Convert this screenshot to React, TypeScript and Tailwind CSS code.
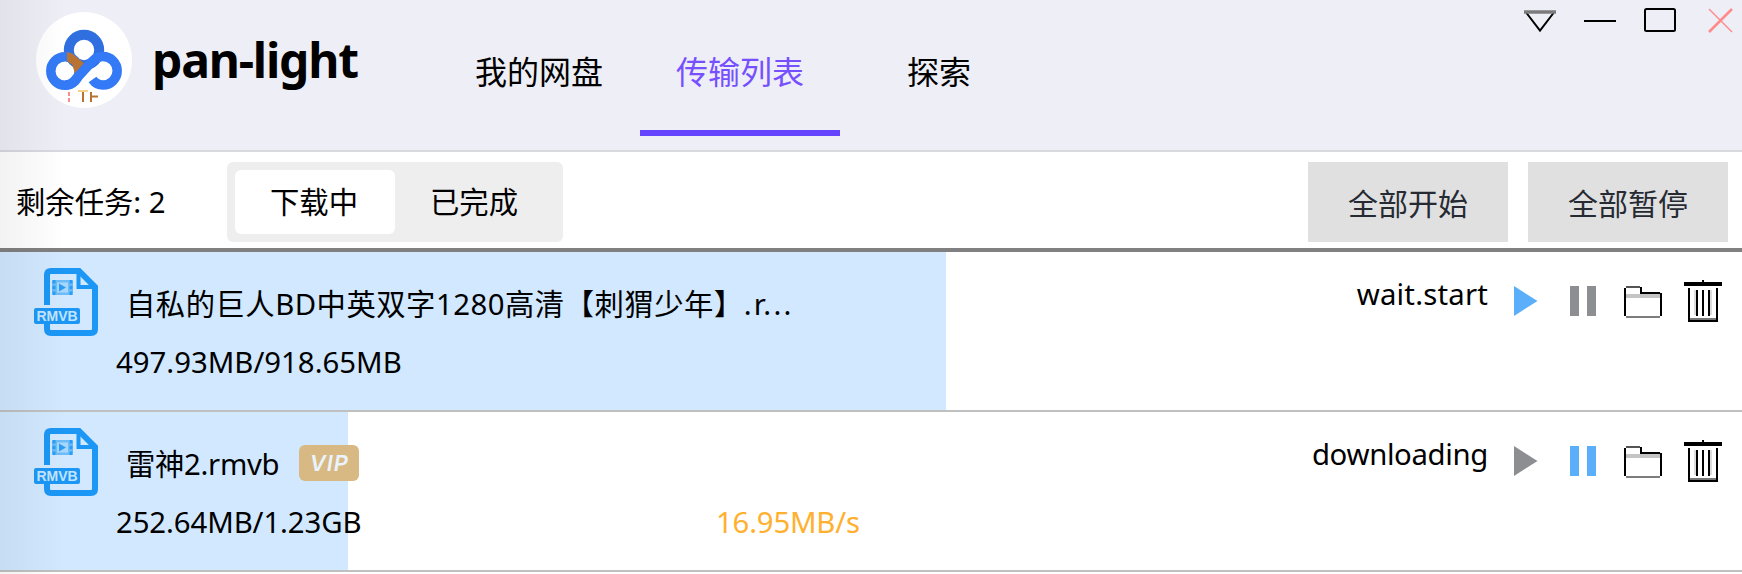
import React from "react";

const FONT = "font-['Noto_Sans','Noto_Sans_CJK_SC',sans-serif]";

function Logo() {
  return (
    <svg className="block h-24 w-24 shrink-0" viewBox="0 0 96 96" fill="none">
      <circle cx="48" cy="48" r="48" fill="#fff" />
      <circle cx="48" cy="38" r="15.2" stroke="#2f6fe0" strokeWidth="10" />
      <circle cx="29" cy="59" r="14.2" stroke="#347af6" strokeWidth="9.5" />
      <path d="M31 40 36 41.500 48 51 39 62 36.500 53 31 49z" fill="#b87333" />
      <path
        d="M56.500 67.500C60 72.500 64 73 67 73a14.200 14.200 0 0 0 0-28.400c-5 0-8 2-11 5L39.500 67.500c-3 3.500-6 5.500-10.500 5.500"
        stroke="#347af6"
        strokeWidth="9.5"
      />
      <path d="M33 80v4M33 86v4" stroke="#fb8b8b" strokeWidth="2" />
      <path d="M42 79h10" stroke="#f5d38c" strokeWidth="2" />
      <path d="M47 80v10M55 80v10M55 84.500h7" stroke="#b87333" strokeWidth="2" />
    </svg>
  );
}

function WindowControls() {
  return (
    <svg className="mt-1.5 mr-2 block h-7 w-[212px] shrink-0" viewBox="0 0 212 28" fill="none" stroke="#000">
      <path d="M4.500 7 18 24.500 31.500 7" strokeWidth="2" />
      <path d="M2 6h32" stroke="#7b7b7d" strokeWidth="3.5" />
      <path d="M62 15h32" strokeWidth="2" />
      <rect x="123" y="3" width="30" height="22" rx="1.5" strokeWidth="2" />
      <path d="M187 3 210 26" stroke="#ff8a8a" strokeWidth="1.5" />
      <path d="M210 3 187 26" stroke="#ff8a8a" strokeWidth="2.5" />
    </svg>
  );
}

function FileIcon() {
  return (
    <div className="relative mt-4 ml-[34px] h-[68px] w-16 shrink-0">
      <svg className="block h-[68px] w-16" viewBox="0 0 64 68" fill="none">
        <path
          d="M13 37V7q0-4 4-4h28l16 16v42q0 4-4 4H17q-4 0-4-4v-5"
          stroke="#1c97f5"
          strokeWidth="6"
        />
        <path d="M44.500 4v15H61" stroke="#1c97f5" strokeWidth="4" />
        <rect x="18" y="12" width="21" height="15" rx="2" fill="#6cbcf9" />
        <path d="M20 12v15M37 12v15" stroke="#2b9df6" strokeWidth="3" strokeDasharray="3.5 2.2" />
        <rect x="23" y="14.5" width="11" height="10" fill="#a9d7fc" />
        <path d="M25 15.500v8l7-4z" fill="#2b9df6" />
        <rect x="0" y="40" width="46" height="16" rx="2" fill="#1c97f5" />
      </svg>
      <span className="absolute top-10 left-0 w-[46px] text-center font-['Liberation_Sans',sans-serif] text-[14px] leading-4 font-bold text-[#c3e4fd]">
        RMVB
      </span>
    </div>
  );
}

function Actions({ running }: { running: boolean }) {
  return (
    <svg className="mt-7 mr-5 ml-[26px] block h-[42px] w-[208px] shrink-0" viewBox="0 0 208 42" fill="none">
      <path d="M0 6 23.500 21 0 36z" fill={running ? "#8c8e91" : "#5aaefa"} />
      <path d="M56 6h9v30h-9zM73 6h9v30h-9z" fill={running ? "#5aaefa" : "#8c8e91"} />
      <path d="M112 16h35" stroke="#c4c4c4" strokeWidth="4" />
      <path d="M112 37h34" stroke="#7d7d7d" strokeWidth="2" />
      <path d="M112 7h14" stroke="#555" strokeWidth="2" />
      <path d="M111 36V8M127 7v6h19M147 13v23" stroke="#000" strokeWidth="2" />
      <path d="M170 4h38" stroke="#000" strokeWidth="4" />
      <path d="M189 0v4" stroke="#000" strokeWidth="2" />
      <path d="M175 39h28" stroke="#777" strokeWidth="2" />
      <path d="M175 8v33h28V8M183 10v26M189 10v26M195 10v26" stroke="#000" strokeWidth="2" />
      <path d="M181 10v25M197 10v25" stroke="#ddd" strokeWidth="2" />
    </svg>
  );
}

type TaskProps = {
  name: React.ReactNode;
  size: React.ReactNode;
  speed?: string;
  status: React.ReactNode;
  progress: number;
  running: boolean;
  vip?: boolean;
};

function Task({ name, size, speed, status, progress, running, vip }: TaskProps) {
  return (
    <div className="relative flex h-40 border-b-2 border-[#c0c0c0] bg-white">
      <div className="absolute inset-y-0 left-0 bg-[#d1e8ff]" style={{ width: progress }} />
      <div className="relative flex w-full items-start">
        <FileIcon />
        <div className="ml-[18px] flex grow flex-col pt-8">
          <div className="flex h-10 items-center pl-2.5">
            <span className="whitespace-nowrap">{name}</span>
            {vip && (
              <span className="mt-[-3px] ml-5 flex h-9 w-15 items-center justify-center rounded-md bg-[#d8b983] font-['Inter',sans-serif] text-[22px] leading-none font-semibold tracking-[1px] text-[#eaf3fb] italic">
                VIP
              </span>
            )}
          </div>
          <div className="mt-[18px] flex h-10 items-center">
            <span className="w-[600px] whitespace-nowrap">{size}</span>
            <span className="tracking-[-0.2px] text-[#ffb02e]">{speed}</span>
          </div>
        </div>
        <span className="mt-[22px] leading-10">{status}</span>
        <Actions running={running} />
      </div>
    </div>
  );
}

export default function App() {
  return (
    <div className={`relative h-[574px] w-[1742px] overflow-hidden bg-white text-[29.33px] leading-10 text-black ${FONT}`}>
      <header className="flex h-[152px] items-start border-b-2 border-[#d7d9de] bg-[#eeeef6]">
        <div className="flex w-[440px] items-start pt-3 pl-9">
          <Logo />
          <h1 className="mt-[18px] ml-5 text-[48px] leading-[60px] font-bold tracking-[-1.2px]">pan-light</h1>
        </div>
        <nav className="flex grow text-[32px]">
          <div className="flex h-[136px] w-[198px] items-center justify-center pt-2">我的网盘</div>
          <div className="ml-0.5 flex h-[136px] w-[200px] items-center justify-center border-b-[6px] border-[#6444ff] pt-3.5 text-[#7650ff]">
            传输列表
          </div>
          <div className="flex h-[136px] w-[198px] items-center justify-center pt-2">探索</div>
        </nav>
        <WindowControls />
      </header>

      <section className="flex h-[100px] items-center border-b-4 border-[#808080] pt-1 pr-[14px]">
        <span className="w-[227px] pl-4">剩余任务: 2</span>
        <div className="flex h-20 w-[336px] items-center rounded-md bg-[#eee] p-2">
          <div className="flex h-16 w-40 items-center justify-center rounded-md bg-white pr-0.5">下载中</div>
          <div className="flex h-16 w-40 items-center justify-center pr-0.5">已完成</div>
        </div>
        <div className="ml-auto flex gap-5 text-[30px] text-[#262a33]">
          <button className="h-20 w-[200px] bg-[#e0e0e0] pt-1">全部开始</button>
          <button className="h-20 w-[200px] bg-[#e0e0e0] pt-1">全部暂停</button>
        </div>
      </section>

      <main>
        <Task
          name={
            <span className="tracking-[0.5px]">
              自私的巨人BD中英双字1280高清【刺猬少年】<span className="tracking-[2.2px]">.r...</span>
            </span>
          }
          size="497.93MB/918.65MB"
          status={<span className="tracking-[0.2px]">wait.start</span>}
          progress={946}
          running={false}
        />
        <Task
          name={<span className="tracking-[-0.3px]">雷神2.rmvb</span>}
          size={<span className="tracking-[-0.1px]">252.64MB/1.23GB</span>}
          speed="16.95MB/s"
          status={<span className="tracking-[-0.35px]">downloading</span>}
          progress={348}
          running
          vip
        />
      </main>

      <div className="pointer-events-none absolute inset-y-0 left-0 w-[66px] bg-linear-to-r from-black/5 to-transparent" />
    </div>
  );
}
